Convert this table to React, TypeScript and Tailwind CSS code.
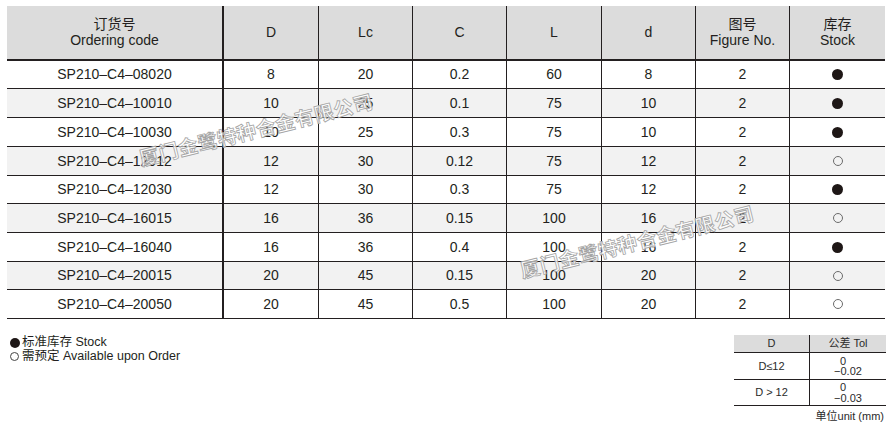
const rows: [string, string, string, string, string, string, string, boolean][] = [
  ["SP210–C4–08020", "8", "20", "0.2", "60", "8", "2", true],
  ["SP210–C4–10010", "10", "25", "0.1", "75", "10", "2", true],
  ["SP210–C4–10030", "10", "25", "0.3", "75", "10", "2", true],
  ["SP210–C4–12012", "12", "30", "0.12", "75", "12", "2", false],
  ["SP210–C4–12030", "12", "30", "0.3", "75", "12", "2", true],
  ["SP210–C4–16015", "16", "36", "0.15", "100", "16", "2", false],
  ["SP210–C4–16040", "16", "36", "0.4", "100", "16", "2", true],
  ["SP210–C4–20015", "20", "45", "0.15", "100", "20", "2", false],
  ["SP210–C4–20050", "20", "45", "0.5", "100", "20", "2", false],
];

const rowHeights = ["h-[28px]", "h-[29px]", "h-[29px]", "h-[29px]", "h-[28px]", "h-[29px]", "h-[29px]", "h-[28px]", "h-[29px]"];

const gridCols = "grid grid-cols-[217px_95px_94px_94px_95px_94px_94px_95px]";
const cell = "flex items-center justify-center border-r border-[#231f20]";

const Dot = ({ filled }: { filled: boolean }) =>
  filled ? (
    <span className="inline-block w-[11px] h-[11px] rounded-full bg-[#1e1716]" />
  ) : (
    <span className="inline-block w-[10px] h-[10px] rounded-full border border-[#6b6b6b]" />
  );

const Watermark = ({ pos }: { pos: string }) => (
  <div
    className={`absolute ${pos} -translate-x-1/2 -translate-y-1/2 rotate-[-14deg] whitespace-nowrap pointer-events-none text-[19.5px] leading-none font-bold tracking-[0.5px] text-[rgba(255,255,255,0.8)] [-webkit-text-stroke:0.8px_#a3a3a3] font-['Noto_Sans_CJK_SC',sans-serif]`}
  >
    厦门金鹭特种合金有限公司
  </div>
);

export default function App() {
  return (
    <div className="relative w-[889px] h-[427px] bg-white text-[#231f20] font-['Liberation_Sans','Noto_Sans_CJK_SC',sans-serif] overflow-hidden">
      <div className="ml-[7px] pt-[6px] w-[878px]">
        <div className={`${gridCols} h-[55px] bg-[#dcdcdc] border-b-2 border-[#231f20] text-[14px] leading-[15.5px]`}>
          <div className={`${cell} border-r-2 flex-col`}>
            <span>订货号</span>
            <span>Ordering code</span>
          </div>
          <div className={cell}>D</div>
          <div className={cell}>Lc</div>
          <div className={cell}>C</div>
          <div className={cell}>L</div>
          <div className={cell}>d</div>
          <div className={`${cell} flex-col`}>
            <span>图号</span>
            <span>Figure No.</span>
          </div>
          <div className="flex flex-col items-center justify-center">
            <span>库存</span>
            <span>Stock</span>
          </div>
        </div>
        {rows.map((r, i) => (
          <div
            key={r[0]}
            className={`${gridCols} ${rowHeights[i]} border-b border-[#231f20] text-[14px] ${i % 2 === 1 ? "bg-[#f2f2f2]" : "bg-white"}`}
          >
            <div className={`${cell} border-r-2`}>{r[0]}</div>
            <div className={cell}>{r[1]}</div>
            <div className={cell}>{r[2]}</div>
            <div className={cell}>{r[3]}</div>
            <div className={cell}>{r[4]}</div>
            <div className={cell}>{r[5]}</div>
            <div className={cell}>{r[6]}</div>
            <div className="flex items-center justify-center">
              <Dot filled={r[7]} />
            </div>
          </div>
        ))}
      </div>

      <div className="flex justify-between items-start w-[886px] pl-[10px] mt-[16px]">
        <div className="pt-[1px] text-[12.5px] leading-[13.5px]">
          <div className="flex items-center">
            <span className="inline-block w-[10px] h-[10px] rounded-full bg-[#1e1716] mr-[2px]" />
            <span>标准库存 Stock</span>
          </div>
          <div className="flex items-center">
            <span className="inline-block w-[9px] h-[9px] rounded-full border border-[#444] mr-[3px]" />
            <span>需预定 Available upon Order</span>
          </div>
        </div>

        <div className="w-[152px] text-[11px] text-[#2a2a2a]">
          <div className="grid grid-cols-2 h-[18px] bg-[#dcdcdc] border-b border-[#231f20]">
            <div className="flex items-center justify-center border-r border-[#231f20]">D</div>
            <div className="flex items-center justify-center">公差 Tol</div>
          </div>
          <div className="grid grid-cols-2 h-[27px] border-b border-[#231f20]">
            <div className="flex items-center justify-center border-r border-[#231f20]">D≤12</div>
            <div className="flex items-center justify-center">
              <div className="flex flex-col items-start leading-[10.5px]">
                <span className="ml-[6px]">0</span>
                <span>−0.02</span>
              </div>
            </div>
          </div>
          <div className="grid grid-cols-2 h-[26px] border-b border-[#231f20]">
            <div className="flex items-center justify-center border-r border-[#231f20]">D &gt; 12</div>
            <div className="flex items-center justify-center">
              <div className="flex flex-col items-start leading-[10.5px]">
                <span className="ml-[6px]">0</span>
                <span>−0.03</span>
              </div>
            </div>
          </div>
          <div className="mt-[5px] text-right pr-[2px] leading-[11px]">单位unit (mm)</div>
        </div>
      </div>

      <Watermark pos="left-[256px] top-[129px]" />
      <Watermark pos="left-[637px] top-[241px]" />
    </div>
  );
}
